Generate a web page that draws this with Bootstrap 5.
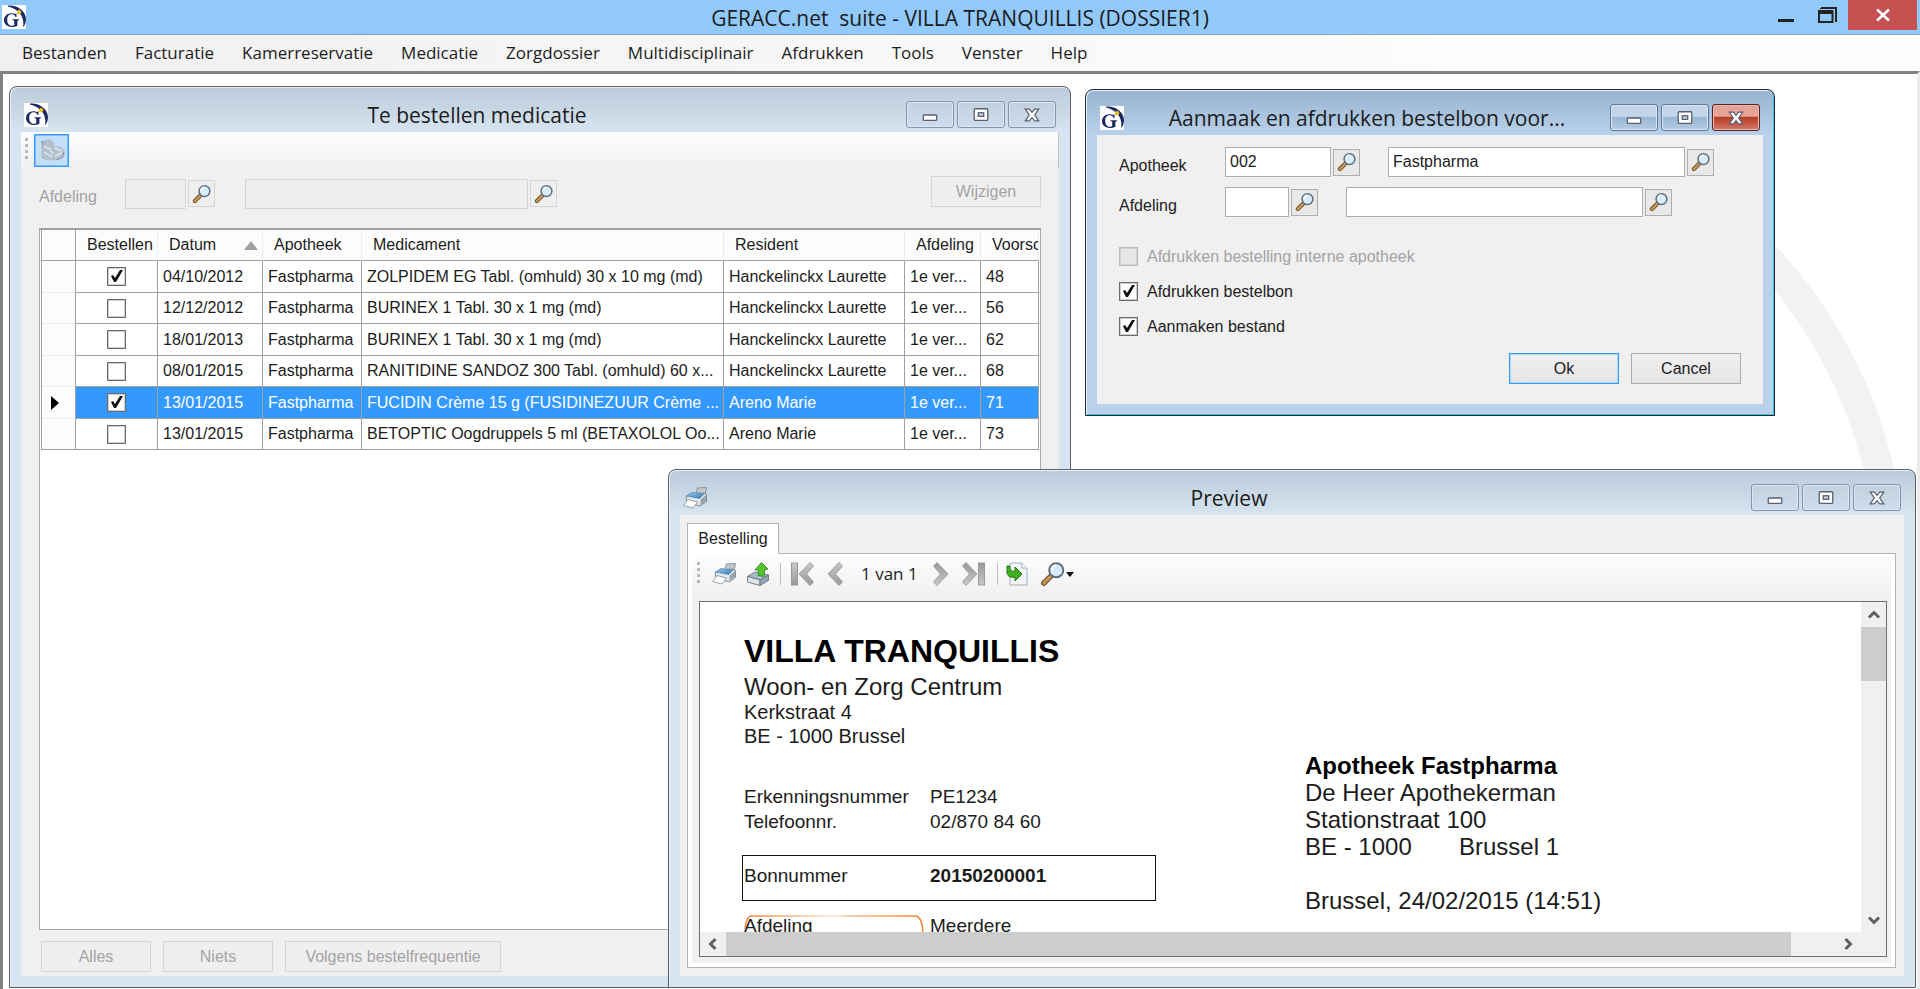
<!DOCTYPE html>
<html lang="nl">
<head>
<meta charset="utf-8">
<meta name="viewport" content="width=device-width, initial-scale=1">
<title>GERACC.net suite</title>
<link href="https://cdn.jsdelivr.net/npm/bootstrap@5.3.0/dist/css/bootstrap.min.css" rel="stylesheet">
<style>
  body { font: 16px/20px "Liberation Sans", Arial, sans-serif; color: #1c1c1c; background: #fff; }
  .ui-font { font-family: "Open Sans", "Noto Sans", sans-serif; }
  button { color: inherit; font: inherit; padding: 0; }
  svg { display: block; }

  /* application frame */
  .app-bar { height: 35px; background: #91c9fa; border-bottom: 1px solid #7ba7cc; }
  .app-logo { margin-left: 2px; }
  .app-title { font-size: 21px; line-height: 36px; white-space: pre; }
  .app-close { width: 69px; height: 30px; background: #c75050; border: 0; margin-right: 3px; }
  .app-ctl { border: 0; background: none; }
  .menu-bar { height: 36px; background: linear-gradient(90deg, #f0f0f0, #fcfcfc 75%); padding-left: 22px; gap: 28px; font-size: 17px; }
  .menu-bar a { color: #1c1c1c; text-decoration: none; line-height: 36px; }
  .mdi { border-top: 3px solid #828282; border-left: 3px solid #828282; border-right: 3px solid #ececec; background: #fff; min-height: 0; }
  .ring { position: absolute; left: 1320px; top: 0; }

  /* child windows */
  .win { position: absolute; border: 1px solid #5c5f63; border-radius: 8px 8px 0 0; padding: 0 11px 11px;
         background: linear-gradient(#bccbd9, #d7e4f2 45px); box-shadow: inset 1px 1px 0 #e8f0f8; }
  .win-active { background: linear-gradient(#98b3d1, #b9d1ea 45px); border-color: #1c2b33; box-shadow: inset 1px 1px 0 #e8f4fc, inset -1px -1px 0 #35c4e0; }
  .win-order { left: 6px; top: 12px; bottom: 1px; width: 1062px; }
  .win-voucher { left: 1082px; top: 15px; width: 690px; height: 327px; }
  .win-preview { left: 665px; right: 1px; top: 395px; bottom: 1px; }
  .win-head { height: 45px; padding: 10px 3px 0; gap: 3px; flex: none; }
  .win-title { font-size: 21px; line-height: 30px; }
  .win-body { background: #f0f0f0; min-height: 0; }
  .win-btn { width: 48px; height: 27px; border: 1px solid #8496ac; border-radius: 3px; background: linear-gradient(#c3d1df, #cfdceb); box-shadow: inset 0 0 0 1px #dbe6f1; }
  .win-active .win-btn { border-color: #5f7894; background: linear-gradient(#c2d5e9 45%, #9db7d3 50%, #b4cbe4); }
  .win-active .win-btn-close { border-color: #5a2323; background: linear-gradient(#e5a398 45%, #b93c22 50%, #cf7a68); box-shadow: inset 0 0 0 1px #e9b9b1; }

  .tool-strip { height: 36px; padding-left: 4px; gap: 6px; background: linear-gradient(#fdfdfd, #f0f0f0); border-right: 1px solid #c4c4c4; flex: none; }
  .grip { width: 3px; height: 24px; background: repeating-linear-gradient(#b8b8b8 0 3px, transparent 3px 6px); }
  .tool-on { width: 35px; height: 33px; border: 1px solid #3399ff; background: #c2dffb; box-shadow: inset 0 0 0 1px #7dbcfc; }
  .tool-btn { border: 0; background: none; }

  /* form controls */
  .field { height: 30px; border: 1px solid #abadb3; background: #fff; border-radius: 0; padding: 0 4px; color: #1c1c1c; line-height: 20px; }
  .look-btn { width: 27px; height: 27px; border: 1px solid #adadad; background: #e8e8e8; margin-left: 2px; flex: none; }
  .cmd { height: 31px; width: 110px; border: 1px solid #adadad; background: linear-gradient(#f0f0f0, #e5e5e5); }
  .cmd-default { border-color: #3399ff; box-shadow: inset 0 0 0 1px #b4d8fb; }
  .cmd-wide { width: 216px; }
  .off { color: #a3a3a3; }
  .off .field, .off .look-btn, .cmd:disabled { background: #efefef; border-color: #d5d5d5; color: #a3a3a3; }
  .w-code { width: 61px; }
  .w-code2 { width: 64px; }
  .w-code3 { width: 106px; }
  .w-name { width: 283px; }
  .w-name2 { width: 297px; }
  .gap-name { margin-left: 28px; }
  .lead-label { width: 86px; }
  .lead-label2 { width: 106px; }
  .order-form { padding: 0 18px 4px; min-height: 0; }
  .filter-row { height: 33px; margin: 8px 0 19px; flex: none; }
  .filter-row .look-btn { margin-bottom: 2px; }
  .filter-row .gap-name { margin-left: 30px; }
  .cmd-row { gap: 12px; padding: 11px 0 0 2px; }
  .voucher-form { padding: 12px 22px 20px; }
  .voucher-rows, .voucher-opts { display: flex; flex-direction: column; gap: 10px; }
  .voucher-opts { gap: 16px; margin-top: 30px; }
  .tick { appearance: none; width: 19px; height: 19px; border: 1px solid #6a6a6a; background: #fff center/15px no-repeat; margin: 0; display: block; flex: none; box-shadow: inset 0 0 0 1px #cfcfcf; }
  .tick:checked { background-image: url("data:image/svg+xml,%3Csvg xmlns='http://www.w3.org/2000/svg' viewBox='0 0 15 15'%3E%3Cpath d='M2 7l2-1 2 3 5-8h3L7 13H5z' fill='%23111'/%3E%3C/svg%3E"); }
  .tick:disabled { background: #e6e6e6; border-color: #bcbcbc; }
  .opt { gap: 9px; height: 19px; }

  /* medication grid */
  .grid-box { border: 1px solid #a9abb1; border-top: 2px solid #a0a0a0; background: #fff; padding: 0 1px; overflow: hidden; min-height: 0; }
  .grid { table-layout: fixed; width: 100%; border-collapse: separate; border-spacing: 0; border-left: 1px solid #a0a0a0; }
  .grid th, .grid td { overflow: hidden; white-space: nowrap; border-right: 1px solid #a0a0a0; border-bottom: 1px solid #a0a0a0; padding: 0 0 0 5px; }
  .grid thead th { height: 31px; font-weight: 400; background: #fcfcfc; border-right-color: #e2eefa; padding: 0 0 0 11px; }
  .grid thead th:first-child { border-right-color: #a0a0a0; }
  .grid tbody tr { height: 32px; }
  .grid tbody tr:nth-child(even) { height: 31px; }
  .grid tbody th { border-bottom-color: #e2eefa; background: #fcfcfc; }
  .grid tbody td.pick { padding: 0; }
  .grid tbody tr.current td { background: #3399ff; color: #fff; }
  .grid tbody tr:last-child th { border-bottom-color: #a0a0a0; }
  .c0 { width: 34px; } .c1 { width: 82px; } .c2 { width: 105px; } .c3 { width: 99px; }
  .c5 { width: 181px; } .c6 { width: 76px; } .c7 { width: 58px; }

  /* preview */
  .preview-body { padding: 8px; }
  .tab-active { border: 1px solid #b4b4b4; border-bottom: 0; background: #fff; width: 92px; height: 31px; margin: 0 0 -1px -1px; position: relative; flex: none; }
  .tab-pane-box { border: 1px solid #b4b4b4; margin-left: -1px; background: #f0f0f0; box-shadow: inset 0 0 0 4px #fff; padding: 3px 4px 10px; min-height: 0; }
  .report-bar { height: 44px; padding: 0 0 10px 5px; background: linear-gradient(#fcfcfc, #efefef); flex: none; }
  .gap-a { margin-right: 12px; }
  .gap-b { margin-right: 10px; }
  .sep { width: 1px; height: 22px; background: #bdbdbd; }
  .page-count { font-size: 17px; width: 54px; white-space: nowrap; margin: 0 18px 0 6px; }
  .viewer { border: 1px solid #6f6f6f; background: #fff; margin: 0 4px 0 7px; min-height: 0; }
  .vbar { width: 25px; background: #f0f0f0; flex: none; }
  .vthumb { height: 54px; background: #cdcdcd; }
  .arrow-v { height: 25px; }
  .arrow-h { width: 26px; }
  .hbar { height: 24px; background: #f0f0f0; flex: none; padding-right: 25px; }
  .hthumb { width: 96%; background: #cdcdcd; }
  .sheet { padding: 33px 0 0 44px; min-height: 0; }
  .sheet-left { width: 414px; margin-right: 147px; flex: none; }
  .doc-name { font-size: 32px; line-height: 32px; color: #000; margin: 0 0 7px; font-weight: 700; white-space: nowrap; }
  .doc-sub { font-size: 24px; line-height: 26px; }
  .doc-addr { font-size: 20px; line-height: 24px; }
  .doc-list { margin: 36px 0 0; }
  .doc-row { font-size: 19px; line-height: 25px; display: flex; }
  .doc-row dt { width: 186px; font-weight: 400; }
  .doc-row dd { margin: 0; }
  .doc-box { border: 1px solid #111; height: 46px; margin: 21px 0 0 -2px; padding: 7px 0 0 1px; width: 414px; }
  .doc-dept { margin-top: 12px; position: relative; }
  .doc-curve { position: absolute; left: 0; top: 0; }
  .doc-to { font-size: 24px; line-height: 27px; padding-top: 117px; white-space: nowrap; }
  .doc-to strong { color: #000; }
  .doc-city { width: 154px; display: inline-block; }
</style>
</head>
<body class="vh-100 d-flex flex-column overflow-hidden">

<svg width="0" height="0" class="position-absolute" aria-hidden="true">
  <defs>
    <linearGradient id="gMetal" x1="0" y1="0" x2="0" y2="1"><stop offset="0" stop-color="#c9c9c9"/><stop offset="1" stop-color="#989898"/></linearGradient>
    <linearGradient id="gBlue" x1="0" y1="0" x2="1" y2="1"><stop offset="0" stop-color="#9fd0f5"/><stop offset="1" stop-color="#2f78b4"/></linearGradient>
    <linearGradient id="gOrange"><stop offset="0" stop-color="#f58233"/><stop offset=".5" stop-color="#fde6d6"/><stop offset=".6" stop-color="#f9b98e"/><stop offset="1" stop-color="#f58233"/></linearGradient>
    <symbol id="logo" viewBox="0 0 24 24">
      <rect width="24" height="24" fill="#fff"/>
      <path d="M6 .500C15-.500 24 6 24 14C24 18 22.500 21 21 22C22.500 15 20 5 6 1.500Z" fill="#1b2a63"/>
      <path d="M15 6l2.500-1.500 2 2.500-1.500 2.500-3-.500z" fill="#f4c21d"/>
      <path d="M14.500 8.500v3.500h-1c-.500-2-1.800-2.800-3.700-2.800-3 0-4.600 2.200-4.600 5.500 0 3.500 1.500 6 4.800 6 1 0 1.600-.200 2.200-.500v-3.700c0-.800-.400-1.200-1.700-1.200v-1h6.500v1c-1 0-1.600.300-1.600 1.200v4.200c-1.500.800-3.200 1.200-5.200 1.200C5.200 21.900 2 19.300 2 15.300 2 11 5.200 8.200 9.500 8.200c1.500 0 2.400.300 3.200.800.500 0 .800-.200 1-.500z" fill="#1b2a63"/>
    </symbol>
    <symbol id="lens" viewBox="0 0 24 24">
      <path d="M3.500 20.500L11 13" stroke="#6b4a20" stroke-width="5" stroke-linecap="round"/>
      <path d="M3.500 20.500L10 14" stroke="#c79558" stroke-width="3" stroke-linecap="round"/>
      <circle cx="15" cy="8.500" r="6.500" fill="#d8ecfb" stroke="#5c6f80" stroke-width="1.800"/>
      <path d="M11 8a4 4 0 0 1 4-4" stroke="#fff" stroke-width="2" fill="none"/>
    </symbol>
    <symbol id="min" viewBox="0 0 20 20"><rect x="2.500" y="10" width="15" height="6" rx="1" fill="#fff" stroke="#5a6172" stroke-width="1.500"/></symbol>
    <symbol id="max" viewBox="0 0 20 20"><rect x="2.500" y="3" width="15" height="13" rx="1" fill="#fff" stroke="#5a6172" stroke-width="1.500"/><rect x="7" y="7.500" width="6" height="4" fill="#c5d2e2" stroke="#5a6172" stroke-width="1.500"/></symbol>
    <symbol id="cls" viewBox="0 0 20 20"><path d="M2.500 3.500h4.500l3 3.500 3-3.500h4.500l-4.500 6.500 4.500 6.500H13l-3-3.500-3 3.500H2.500L7 10z" fill="#fff" stroke="#5a6172" stroke-width="1.400"/></symbol>
    <symbol id="printer" viewBox="0 0 24 22">
      <path d="M14.500 1L23.500.500 22 8l-9-1.500z" fill="#c3c8cc" stroke="#82898e" stroke-width=".9"/>
      <path d="M3 9.500L8 7l12-1 3.500 1.500v7L17 19l-13-4z" fill="#e3e8eb" stroke="#79828a" stroke-width=".9"/>
      <path d="M3.500 9L9 5.500l12 1.500-4.500 4.500z" fill="url(#gBlue)" stroke="#3a77a8" stroke-width=".6"/>
      <path d="M17.500 12.500l5.500-4.500v6l-5.500 4.500z" fill="#9aa3a9"/>
      <path d="M5 12.500l9.500 2.500-4.500 6L.500 18.500z" fill="#fdfdfd" stroke="#9199a0" stroke-width=".9"/>
    </symbol>
    <symbol id="export" viewBox="0 0 24 24">
      <path d="M1.500 14.500L9 10l13.500 3L15 18z" fill="#a9bccb" stroke="#6a757e" stroke-width=".9"/>
      <path d="M1.500 14.500L14 18v5.500L1.500 20z" fill="#dde4e9" stroke="#6a757e" stroke-width=".9"/>
      <path d="M14 18l8.500-5v5.500L14 23.500z" fill="#8fa6b9" stroke="#6a757e" stroke-width=".9"/>
      <path d="M9 8l6.500-7.500 6.500 6.500-3 .500-1 7-6-1 .5-5.500z" fill="#56c432" stroke="#2f8a17" stroke-width=".9"/>
    </symbol>
    <symbol id="prev" viewBox="0 0 16 24"><path d="M12 .500l3.500 3.500L8.500 12l7 8-3.500 3.500L1 12z" fill="url(#gMetal)" stroke="#999" stroke-width=".9"/></symbol>
    <symbol id="refresh" viewBox="0 0 22 24">
      <path d="M4 1h12l5 5v17H4z" fill="#f2f6fa" stroke="#a3afb9"/><path d="M16 1v5h5" fill="#fff" stroke="#a3afb9"/>
      <path d="M1 4v6c0 4 3 6 8 5v4l7-7-7-7v4c-4 1-5-1-5-5z" fill="#3fae22" stroke="#24780f"/>
    </symbol>
    <symbol id="chev" viewBox="0 0 14 14"><path d="M9.500 2L4.500 7l5 5" fill="none" stroke="#5f5f5f" stroke-width="3"/></symbol>
  </defs>
</svg>

<header class="app-bar d-flex ui-font">
  <div class="col d-flex align-items-center"><svg class="app-logo" width="24" height="24"><use href="#logo"/></svg></div>
  <div class="app-title">GERACC.net  suite - VILLA TRANQUILLIS (DOSSIER1)</div>
  <div class="col d-flex justify-content-end align-items-start">
    <button class="app-ctl me-4" aria-label="Minimaliseren"><svg width="16" height="28"><path d="M0 20.500h16" stroke="#222" stroke-width="3"/></svg></button>
    <button class="app-ctl me-2" aria-label="Herstellen"><svg width="22" height="28"><path d="M3 8h15v14M3 8v1" fill="none" stroke="#222" stroke-width="2"/><path d="M1 11.500h13.500V22H1z" fill="none" stroke="#222" stroke-width="2"/><path d="M0 12h15" stroke="#222" stroke-width="4"/></svg></button>
    <button class="app-close" aria-label="Sluiten"><svg class="mx-auto" width="14" height="14"><path d="M1 1.500l12 11M13 1.500l-12 11" stroke="#fff" stroke-width="2.500"/></svg></button>
  </div>
</header>

<nav class="menu-bar d-flex flex-shrink-0 ui-font">
  <a href="#">Bestanden</a><a href="#">Facturatie</a><a href="#">Kamerreservatie</a><a href="#">Medicatie</a><a href="#">Zorgdossier</a><a href="#">Multidisciplinair</a><a href="#">Afdrukken</a><a href="#">Tools</a><a href="#">Venster</a><a href="#">Help</a>
</nav>

<main class="mdi flex-fill position-relative overflow-hidden">
  <svg class="ring" width="600" height="500" aria-hidden="true"><path d="M0 45A468 468 0 0 1 568 491" fill="none" stroke="#f2f2f2" stroke-width="30"/></svg>

  <section class="win win-order d-flex flex-column">
    <div class="win-head d-flex align-items-center">
      <svg width="24" height="24"><use href="#logo"/></svg>
      <div class="win-title ui-font flex-fill text-center">Te bestellen medicatie</div>
      <button class="win-btn" aria-label="Minimaliseren"><svg class="mx-auto" width="18" height="18"><use href="#min"/></svg></button>
      <button class="win-btn" aria-label="Maximaliseren"><svg class="mx-auto" width="18" height="18"><use href="#max"/></svg></button>
      <button class="win-btn" aria-label="Sluiten"><svg class="mx-auto" width="18" height="18"><use href="#cls"/></svg></button>
    </div>
    <div class="win-body d-flex flex-column flex-fill">
      <div class="tool-strip d-flex align-items-center">
        <span class="grip"></span>
        <button class="tool-on" aria-label="Bestelbon"><svg class="mx-auto" width="26" height="24" viewBox="0 0 26 24"><path d="M2 3l9-2 4 4v3l7 1 4 4-1 6-6 3-8 .500L3 21l-1-7 1-3z" fill="#b3c0cc"/><path d="M4 8l7 3 3 5M15 10l8 3M5 14l8 5M16 18l7-3" stroke="#d3dfe9" stroke-width="2" fill="none"/><path d="M2 3.500l2 1v5M25 14l-2 6-6 2" stroke="#8796a4" fill="none"/></svg></button>
      </div>
      <div class="order-form d-flex flex-column flex-fill">
        <div class="filter-row off d-flex align-items-end">
          <label class="lead-label align-self-center pt-2" for="a1">Afdeling</label>
          <input id="a1" class="field w-code" disabled><button class="look-btn" disabled aria-label="Zoek code"><svg class="mx-auto" width="20" height="20"><use href="#lens"/></svg></button>
          <input class="field w-name gap-name" aria-label="Naam afdeling" disabled><button class="look-btn" disabled aria-label="Zoek naam"><svg class="mx-auto" width="20" height="20"><use href="#lens"/></svg></button>
          <button class="cmd ms-auto align-self-start" disabled>Wijzigen</button>
        </div>
        <div class="grid-box flex-fill">
          <table class="grid">
            <colgroup><col class="c0"><col class="c1"><col class="c2"><col class="c3"><col><col class="c5"><col class="c6"><col class="c7"></colgroup>
            <thead><tr><th></th><th>Bestellen</th><th><div class="d-flex align-items-center justify-content-between pe-1">Datum<svg width="14" height="9"><path d="M0 9l7-9 7 9z" fill="#a0a0a0"/></svg></div></th><th>Apotheek</th><th>Medicament</th><th>Resident</th><th>Afdeling</th><th>Voorschrift</th></tr></thead>
            <tbody>
              <tr><th></th><td class="pick"><input type="checkbox" class="tick mx-auto" aria-label="Bestellen" checked></td><td>04/10/2012</td><td>Fastpharma</td><td>ZOLPIDEM EG Tabl. (omhuld) 30 x 10 mg (md)</td><td>Hanckelinckx Laurette</td><td>1e ver...</td><td>48</td></tr>
              <tr><th></th><td class="pick"><input type="checkbox" class="tick mx-auto" aria-label="Bestellen"></td><td>12/12/2012</td><td>Fastpharma</td><td>BURINEX 1 Tabl. 30 x 1 mg (md)</td><td>Hanckelinckx Laurette</td><td>1e ver...</td><td>56</td></tr>
              <tr><th></th><td class="pick"><input type="checkbox" class="tick mx-auto" aria-label="Bestellen"></td><td>18/01/2013</td><td>Fastpharma</td><td>BURINEX 1 Tabl. 30 x 1 mg (md)</td><td>Hanckelinckx Laurette</td><td>1e ver...</td><td>62</td></tr>
              <tr><th></th><td class="pick"><input type="checkbox" class="tick mx-auto" aria-label="Bestellen"></td><td>08/01/2015</td><td>Fastpharma</td><td>RANITIDINE SANDOZ 300 Tabl. (omhuld) 60 x...</td><td>Hanckelinckx Laurette</td><td>1e ver...</td><td>68</td></tr>
              <tr class="current"><th><svg class="ms-1" width="8" height="14"><path d="M0 0l8 7-8 7z" fill="#000"/></svg></th><td class="pick"><input type="checkbox" class="tick mx-auto" aria-label="Bestellen" checked></td><td>13/01/2015</td><td>Fastpharma</td><td>FUCIDIN Crème 15 g (FUSIDINEZUUR Crème ...</td><td>Areno Marie</td><td>1e ver...</td><td>71</td></tr>
              <tr><th></th><td class="pick"><input type="checkbox" class="tick mx-auto" aria-label="Bestellen"></td><td>13/01/2015</td><td>Fastpharma</td><td>BETOPTIC Oogdruppels 5 ml (BETAXOLOL Oo...</td><td>Areno Marie</td><td>1e ver...</td><td>73</td></tr>
            </tbody>
          </table>
        </div>
        <div class="cmd-row d-flex">
          <button class="cmd" disabled>Alles</button><button class="cmd" disabled>Niets</button><button class="cmd cmd-wide" disabled>Volgens bestelfrequentie</button>
        </div>
      </div>
    </div>
  </section>

  <section class="win win-active win-voucher d-flex flex-column">
    <div class="win-head d-flex align-items-center">
      <svg width="24" height="24"><use href="#logo"/></svg>
      <div class="win-title ui-font flex-fill text-center">Aanmaak en afdrukken bestelbon voor...</div>
      <button class="win-btn" aria-label="Minimaliseren"><svg class="mx-auto" width="18" height="18"><use href="#min"/></svg></button>
      <button class="win-btn" aria-label="Maximaliseren"><svg class="mx-auto" width="18" height="18"><use href="#max"/></svg></button>
      <button class="win-btn win-btn-close" aria-label="Sluiten"><svg class="mx-auto" width="18" height="18"><use href="#cls"/></svg></button>
    </div>
    <div class="win-body voucher-form flex-fill d-flex flex-column">
      <div class="voucher-rows">
        <div class="d-flex align-items-center">
          <label class="lead-label2 pt-2" for="b1">Apotheek</label>
          <input id="b1" class="field w-code3" value="002"><button class="look-btn" aria-label="Zoek code"><svg class="mx-auto" width="20" height="20"><use href="#lens"/></svg></button>
          <input class="field w-name2 gap-name" aria-label="Naam apotheek" value="Fastpharma"><button class="look-btn" aria-label="Zoek naam"><svg class="mx-auto" width="20" height="20"><use href="#lens"/></svg></button>
        </div>
        <div class="d-flex align-items-center">
          <label class="lead-label2 pt-2" for="b2">Afdeling</label>
          <input id="b2" class="field w-code2"><button class="look-btn" aria-label="Zoek code"><svg class="mx-auto" width="20" height="20"><use href="#lens"/></svg></button>
          <input class="field w-name2 gap-name" aria-label="Naam afdeling"><button class="look-btn" aria-label="Zoek naam"><svg class="mx-auto" width="20" height="20"><use href="#lens"/></svg></button>
        </div>
      </div>
      <div class="voucher-opts">
        <div class="opt off d-flex align-items-center"><input type="checkbox" class="tick" id="o1" disabled><label for="o1">Afdrukken bestelling interne apotheek</label></div>
        <div class="opt d-flex align-items-center"><input type="checkbox" class="tick" id="o2" checked><label for="o2">Afdrukken bestelbon</label></div>
        <div class="opt d-flex align-items-center"><input type="checkbox" class="tick" id="o3" checked><label for="o3">Aanmaken bestand</label></div>
      </div>
      <div class="cmd-row d-flex justify-content-end mt-auto"><button class="cmd cmd-default">Ok</button><button class="cmd">Cancel</button></div>
    </div>
  </section>

  <section class="win win-preview d-flex flex-column">
    <div class="win-head d-flex align-items-center">
      <svg width="24" height="22"><use href="#printer"/></svg>
      <div class="win-title ui-font flex-fill text-center">Preview</div>
      <button class="win-btn" aria-label="Minimaliseren"><svg class="mx-auto" width="18" height="18"><use href="#min"/></svg></button>
      <button class="win-btn" aria-label="Maximaliseren"><svg class="mx-auto" width="18" height="18"><use href="#max"/></svg></button>
      <button class="win-btn" aria-label="Sluiten"><svg class="mx-auto" width="18" height="18"><use href="#cls"/></svg></button>
    </div>
    <div class="win-body preview-body flex-fill d-flex flex-column">
      <button class="tab-active">Bestelling</button>
      <div class="tab-pane-box flex-fill d-flex flex-column">
        <div class="report-bar d-flex align-items-center">
          <span class="grip gap-a"></span>
          <button class="tool-btn gap-b" aria-label="Afdrukken"><svg width="24" height="22"><use href="#printer"/></svg></button>
          <button class="tool-btn gap-b" aria-label="Exporteren"><svg width="24" height="24"><use href="#export"/></svg></button>
          <span class="sep gap-b"></span>
          <button class="tool-btn gap-a" aria-label="Eerste"><svg width="24" height="24"><rect x=".5" y="1" width="6" height="22" fill="url(#gMetal)" stroke="#999"/><use href="#prev" x="7" width="16" height="24"/></svg></button>
          <button class="tool-btn gap-a" aria-label="Vorige"><svg width="16" height="24"><use href="#prev"/></svg></button>
          <span class="page-count ui-font">1 van 1</span>
          <button class="tool-btn gap-a" aria-label="Volgende"><svg width="16" height="24"><g transform="rotate(180 8 12)"><use href="#prev"/></g></svg></button>
          <button class="tool-btn gap-a" aria-label="Laatste"><svg width="24" height="24"><g transform="rotate(180 12 12)"><rect x=".5" y="1" width="6" height="22" fill="url(#gMetal)" stroke="#999"/><use href="#prev" x="7" width="16" height="24"/></g></svg></button>
          <span class="sep me-2"></span>
          <button class="tool-btn gap-a" aria-label="Vernieuwen"><svg width="22" height="24"><use href="#refresh"/></svg></button>
          <button class="tool-btn d-flex align-items-center" aria-label="Zoomen"><svg width="26" height="26"><use href="#lens"/></svg><svg width="8" height="5"><path d="M0 0h8L4 5z" fill="#111"/></svg></button>
        </div>
        <div class="viewer flex-fill d-flex flex-column">
          <div class="d-flex flex-fill overflow-hidden">
            <div class="sheet d-flex flex-fill overflow-hidden">
              <div class="sheet-left">
                <h1 class="doc-name">VILLA TRANQUILLIS</h1>
                <div class="doc-sub">Woon- en Zorg Centrum</div>
                <div class="doc-addr">Kerkstraat 4<br>BE - 1000 Brussel</div>
                <dl class="doc-list">
                  <div class="doc-row"><dt>Erkenningsnummer</dt><dd>PE1234</dd></div>
                  <div class="doc-row"><dt>Telefoonnr.</dt><dd>02/870 84 60</dd></div>
                  <div class="doc-row doc-box"><dt>Bonnummer</dt><dd class="fw-bold">20150200001</dd></div>
                  <div class="doc-row doc-dept"><svg class="doc-curve" width="180" height="24"><path d="M1 16Q2 4 7 3H172Q178 4 179 20" fill="none" stroke="url(#gOrange)" stroke-width="1.500"/></svg><dt>Afdeling</dt><dd>Meerdere</dd></div>
                </dl>
              </div>
              <div class="doc-to"><strong>Apotheek Fastpharma</strong><br>De Heer Apothekerman<br>Stationstraat 100<br><span class="doc-city">BE - 1000</span>Brussel 1<br><br>Brussel, 24/02/2015 (14:51)</div>
            </div>
            <div class="vbar d-flex flex-column">
              <div class="arrow-v d-flex justify-content-center align-items-center"><svg width="14" height="14"><g transform="rotate(90 7 7)"><use href="#chev"/></g></svg></div>
              <div class="vthumb"></div>
              <div class="arrow-v mt-auto d-flex justify-content-center align-items-center"><svg width="14" height="14"><g transform="rotate(-90 7 7)"><use href="#chev"/></g></svg></div>
            </div>
          </div>
          <div class="hbar d-flex">
            <div class="arrow-h d-flex justify-content-center align-items-center flex-shrink-0"><svg width="14" height="14"><use href="#chev"/></svg></div>
            <div class="flex-fill d-flex"><div class="hthumb"></div></div>
            <div class="arrow-h d-flex justify-content-center align-items-center flex-shrink-0"><svg width="14" height="14"><g transform="rotate(180 7 7)"><use href="#chev"/></g></svg></div>
          </div>
        </div>
      </div>
    </div>
  </section>
</main>
<script src="https://cdn.jsdelivr.net/npm/bootstrap@5.3.0/dist/js/bootstrap.bundle.min.js"></script>
</body>
</html>
